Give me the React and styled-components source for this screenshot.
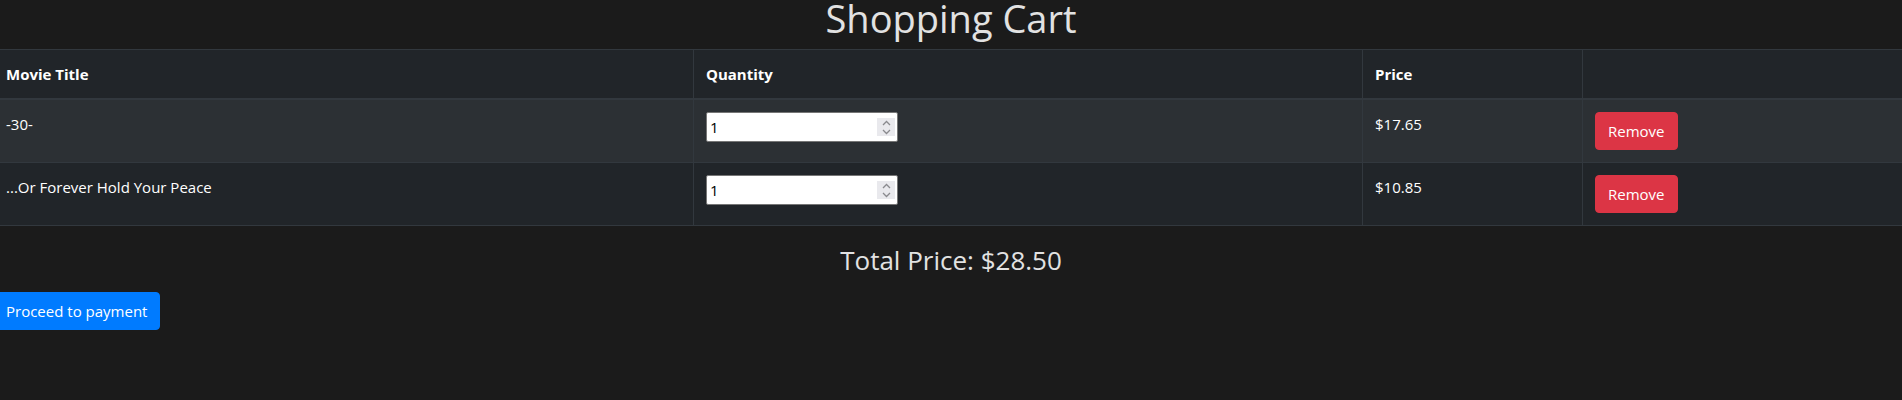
import { useState } from "react";
import styled, { createGlobalStyle } from "styled-components";

const initialCart = [
  { id: 1, title: "-30-", quantity: 1, price: 17.65 },
  { id: 2, title: "...Or Forever Hold Your Peace", quantity: 1, price: 10.85 },
];

const Spinner = ({ onUp, onDown }) => (
  <SpinBox>
    <SpinHalf onClick={onUp}>
      <svg width="9" height="6" viewBox="0 0 9 6">
        <path d="M1 5 L4.5 1.5 L8 5" fill="none" stroke="#8a8a8e" strokeWidth="1.3" />
      </svg>
    </SpinHalf>
    <SpinHalf onClick={onDown}>
      <svg width="9" height="6" viewBox="0 0 9 6">
        <path d="M1 1 L4.5 4.5 L8 1" fill="none" stroke="#8a8a8e" strokeWidth="1.3" />
      </svg>
    </SpinHalf>
  </SpinBox>
);

const ShoppingCart = () => {
  const [cart, setCart] = useState(initialCart);

  const setQuantity = (id, value) => {
    setCart(cart.map((item) => (item.id === id ? { ...item, quantity: value } : item)));
  };

  const removeItem = (id) => {
    setCart(cart.filter((item) => item.id !== id));
  };

  const total = cart.reduce((sum, item) => sum + item.price * (Number(item.quantity) || 0), 0);

  return (
    <PageWrapper>
      <GlobalStyle />
      <Title>Shopping Cart</Title>
      <CartTable>
        <colgroup>
          <col style={{ width: 700 }} />
          <col style={{ width: 669 }} />
          <col style={{ width: 220 }} />
          <col />
        </colgroup>
        <thead>
          <tr>
            <HeadCell>Movie Title</HeadCell>
            <HeadCell>Quantity</HeadCell>
            <HeadCell>Price</HeadCell>
            <HeadCell />
          </tr>
        </thead>
        <tbody>
          {cart.map((item, i) => (
            <Row key={item.id} $striped={i % 2 === 0}>
              <Cell>{item.title}</Cell>
              <Cell>
                <InputWrap>
                  <QuantityInput
                    type="number"
                    min="1"
                    value={item.quantity}
                    onChange={(e) => setQuantity(item.id, e.target.value)}
                  />
                  <Spinner
                    onUp={() => setQuantity(item.id, (Number(item.quantity) || 0) + 1)}
                    onDown={() => setQuantity(item.id, Math.max(1, (Number(item.quantity) || 0) - 1))}
                  />
                </InputWrap>
              </Cell>
              <Cell>${item.price.toFixed(2)}</Cell>
              <Cell>
                <Button $variant="danger" onClick={() => removeItem(item.id)}>
                  Remove
                </Button>
              </Cell>
            </Row>
          ))}
        </tbody>
      </CartTable>
      <TotalPrice>Total Price: ${total.toFixed(2)}</TotalPrice>
      <PaymentRow>
        <Button $variant="primary">Proceed to payment</Button>
      </PaymentRow>
    </PageWrapper>
  );
};

export default ShoppingCart;

const GlobalStyle = createGlobalStyle`
  body {
    margin: 0;
    background: #1b1b1b;
    color: #fff;
    font-family: "Open Sans", "Noto Sans", sans-serif;
    font-size: 16px;
    line-height: 1.5;
  }
`;

const PageWrapper = styled.div`
  margin: -6px 0 0 -7px;
  width: calc(100% + 14px);
  overflow: hidden;
`;

const Title = styled.h1`
  margin: 0 0 7px;
  text-align: center;
  font-size: 38px;
  font-weight: 400;
  line-height: 48px;
  color: #e2e2e2;
`;

const CartTable = styled.table`
  width: 100%;
  table-layout: fixed;
  border-collapse: collapse;
  margin-bottom: 17px;
  background: #212529;
  color: #fff;
`;

const HeadCell = styled.th`
  padding: 12px;
  height: 24px;
  text-align: left;
  vertical-align: bottom;
  font-size: 15px;
  font-weight: 700;
  line-height: 24px;
  border: 1px solid #32383e;
  border-bottom-width: 2px;
`;

const Row = styled.tr`
  background: ${(p) => (p.$striped ? "#2c3034" : "#212529")};
`;

const Cell = styled.td`
  padding: 12px;
  vertical-align: top;
  font-size: 15px;
  line-height: 24px;
  border: 1px solid #32383e;
`;

const InputWrap = styled.div`
  position: relative;
  width: 192px;
  height: 30px;
`;

const QuantityInput = styled.input`
  box-sizing: border-box;
  display: block;
  width: 100%;
  height: 100%;
  margin: 0;
  padding: 1px 24px 1px 3px;
  border: 1px solid #767676;
  border-radius: 2px;
  background: #fff;
  color: #000;
  font-family: "Open Sans", sans-serif;
  font-size: 15px;
  -moz-appearance: textfield;

  &::-webkit-inner-spin-button,
  &::-webkit-outer-spin-button {
    -webkit-appearance: none;
    margin: 0;
  }
`;

const SpinBox = styled.div`
  position: absolute;
  top: 6px;
  right: 3px;
  width: 18px;
  height: 18px;
  display: flex;
  flex-direction: column;
  background: #e9e9ed;
`;

const SpinHalf = styled.div`
  flex: 1;
  display: flex;
  align-items: center;
  justify-content: center;
  cursor: default;
`;

const Button = styled.button`
  display: inline-block;
  height: 38px;
  padding: 6px 12px;
  border: 1px solid ${(p) => (p.$variant === "danger" ? "#dc3545" : "#007bff")};
  border-radius: 4px;
  background: ${(p) => (p.$variant === "danger" ? "#dc3545" : "#007bff")};
  color: #fff;
  font-family: "Open Sans", sans-serif;
  font-size: 15px;
  line-height: 24px;
  cursor: pointer;
`;

const TotalPrice = styled.h3`
  margin: 0 0 8px;
  text-align: center;
  font-size: 26px;
  font-weight: 400;
  line-height: 34px;
  color: #e2e2e2;
`;

const PaymentRow = styled.div`
  padding-top: 7px;
`;
